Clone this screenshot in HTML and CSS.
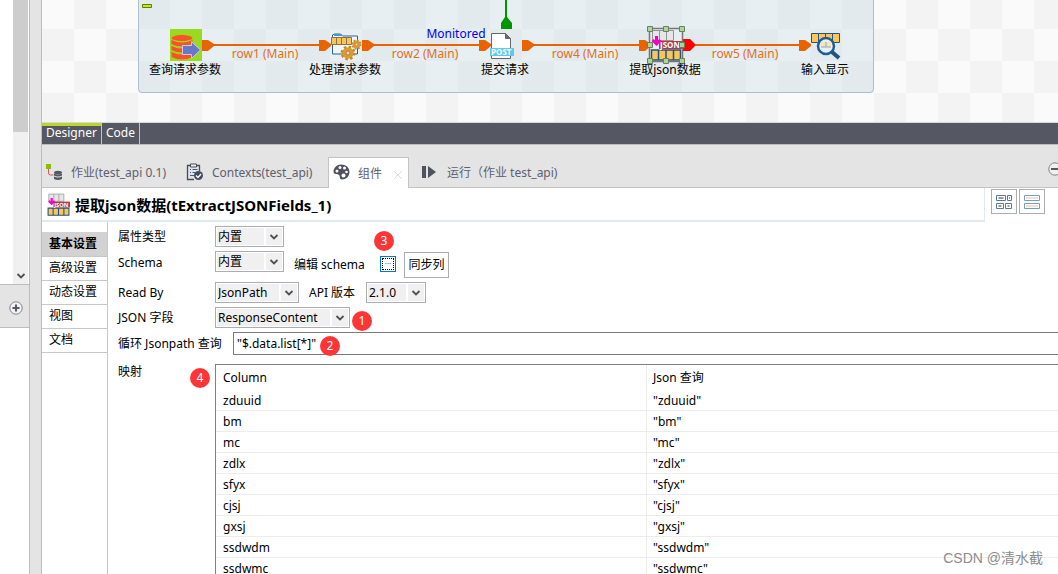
FILE: index.html
```html
<!DOCTYPE html>
<html lang="zh-CN">
<head>
<meta charset="utf-8">
<title>Job designer</title>
<link rel="stylesheet" href="styles.css">
</head>
<body>
<svg class="defs" aria-hidden="true">
  <defs>
    <symbol id="json-icon" viewBox="0 0 32 32">
      <path d="M2.500 1.500h21v10h-21z" fill="#e6e6e8" stroke="#929298"/>
      <path d="M9.500 1.500v10M16.500 1.500v10" stroke="#929298"/>
      <path d="M1.500 21h29v10h-29z" fill="#fbc55a" stroke="#1f5484" stroke-width="1.500"/>
      <path d="M8.500 21v10M16 21v10M23.500 21v10" stroke="#1f5484" stroke-width="1.500"/>
      <path d="M9 12h23v8H9z" fill="#b43c42"/>
      <path d="M6.500 7v8M2.500 11l4 4 4-4" fill="none" stroke="#f400c8" stroke-width="3"/>
      <text x="10" y="19" class="icon-json">JSON</text>
    </symbol>
    <symbol id="chevron" viewBox="0 0 10 8">
      <path d="M1.500 2l3.500 3.500L8.500 2" fill="none" stroke="#505050" stroke-width="1.800"/>
    </symbol>
    <symbol id="gear" viewBox="-8 -8 16 16">
      <circle r="5.800" fill="#dc9a35"/>
      <circle r="6.300" fill="none" stroke="#c98420" stroke-width="2.200" stroke-dasharray="2.400 2.540"/>
      <circle r="2" fill="#f1e3c5" stroke="#b97a20"/>
    </symbol>
  </defs>
</svg>
<div class="workbench">
  <aside class="palette">
    <div class="palette-scroll">
      <div class="scrollbar"><div class="thumb"></div><svg class="scroll-arrow" width="10" height="8"><use href="#chevron"/></svg></div>
    </div>
    <div class="palette-bar">
      <button class="plain" aria-label="Add"><svg width="14" height="14" viewBox="0 0 14 14"><circle cx="7" cy="7" r="6.200" fill="#f2f2f2" stroke="#80808a"/><path d="M3.500 7h7M7 3.500v7" stroke="#555862" stroke-width="2"/></svg></button>
    </div>
  </aside>
  <main class="main">
    <section class="canvas">
      <div class="subjob"></div>
      <svg class="diagram" width="1016" height="122" viewBox="42 0 1016 122">
        <path d="M142.500 4.500h9v3h-9z" fill="#bff000" stroke="#5f7d00"/>
        <g stroke="#e86400" stroke-width="2">
          <path d="M212 45H322M372 45H482M532 45H642M692 45H802"/>
        </g>
        <g fill="#e86400">
          <path d="M202 40h6l6 4v2l-6 5h-6z"/>
          <path d="M319 40h6l6 4v2l-6 5h-6zM362 40h6l6 4v2l-6 5h-6zM479 40h6l6 4v2l-6 5h-6zM522 40h6l6 4v2l-6 5h-6zM639 40h6l6 4v2l-6 5h-6zM799 40h6l6 4v2l-6 5h-6z"/>
        </g>
        <path d="M506 0v18" stroke="#009600" stroke-width="2"/>
        <path d="M501 29v-6l4-6h2l5 6v6z" fill="#009600"/>

        <rect x="170" y="29" width="32" height="32" fill="#99d91f"/>
        <g fill="#ff5029">
          <ellipse cx="182" cy="38" rx="10.500" ry="3"/>
          <path d="M171.500 40q10.500 5 21 0v4q-10.500 5-21 0zM171.500 46q10.500 5 21 0v4q-10.500 5-21 0zM171.500 52q10.500 5 21 0v5q-10.500 5-21 0z"/>
        </g>
        <path d="M182.500 45.500h9v-4l9 8.500-9 8.500v-4h-9z" fill="#6878c8" stroke="#c9cbed"/>

        <path d="M332.500 36v-1l2-1h6l2 2h15v18h-25z" fill="#eef6f9" stroke="#2a6496"/>
        <path d="M334 34h8v2h-8z" fill="#4a9ad0"/>
        <path d="M331.500 37.500h20v7h-20z" fill="#fbc55a" stroke="#8c723c"/>
        <path d="M336.500 37v7M341.500 37v7M346.500 37v7" stroke="#8c723c"/>
        <use href="#gear" x="340" y="45" width="16" height="16"/>
        <use href="#gear" x="351" y="39" width="11" height="11"/>

        <path d="M491.500 33.500h14l5 5v20h-19z" fill="#fff" stroke="#666570"/>
        <path d="M505.500 33.500v5h5z" fill="#666570" stroke="#666570"/>
        <path d="M490 48h24v8h-24z" fill="#5ec8ee"/>
        <text x="491" y="55" class="icon-post">POST</text>

        <use href="#json-icon" x="650" y="29" width="32" height="32"/>
        <path d="M682 39h8l5 5v2l-5 5h-8z" fill="#f00"/>
        <path d="M649.500 28.500h33v33h-33z" fill="none" stroke="#777" stroke-width="1.500"/>
        <g fill="#a8d893" stroke="#6b7c65">
          <path d="M647.500 26.500h5v5h-5zM663.500 26.500h5v5h-5zM679.500 26.500h5v5h-5zM647.500 42.500h5v5h-5zM679.500 42.500h5v5h-5zM647.500 58.500h5v5h-5zM663.500 58.500h5v5h-5zM679.500 58.500h5v5h-5z"/>
        </g>

        <path d="M811.500 33.500h28v9h-28z" fill="#fbc55a" stroke="#1f5484"/>
        <path d="M818.500 33v10M825.500 33v10M832.500 33v10" stroke="#1f5484"/>
        <circle cx="826" cy="46" r="8" fill="#e4f0f7" stroke="#1f5d91" stroke-width="2.500"/>
        <path d="M821 42h10v5h-10z" fill="#fbe4b0"/><path d="M826 42v5M821 47h10" stroke="#8ba9bd"/>
        <path d="M832 52l7 6" stroke="#1f5484" stroke-width="4"/>

        <g class="row-label">
          <text x="265" y="58">row1 (Main)</text>
          <text x="425" y="58">row2 (Main)</text>
          <text x="585" y="58">row4 (Main)</text>
          <text x="745" y="58">row5 (Main)</text>
        </g>
        <text class="monitored" x="456" y="38">Monitored</text>
        <g class="node-label">
          <text x="185" y="74">查询请求参数</text>
          <text x="345" y="74">处理请求参数</text>
          <text x="505" y="74">提交请求</text>
          <text x="665" y="74">提取json数据</text>
          <text x="825" y="74">输入显示</text>
        </g>
      </svg>
    </section>
    <nav class="editor-tabs">
      <button class="editor-tab active">Designer</button>
      <button class="editor-tab">Code</button>
    </nav>
    <nav class="view-tabs">
      <button class="view-tab job">
        <svg width="18" height="18" viewBox="0 0 18 18"><path d="M1 1h5v5H1z" fill="#8cbe00"/><path d="M3.500 6v4q0 2 2 2h3" fill="none" stroke="#d9545c"/><g fill="#555862"><ellipse cx="13" cy="9.500" rx="4" ry="1.800"/><path d="M9 10.500q4 2 8 0v2q-4 2-8 0zM9 13.500q4 2 8 0v2.500q-4 2-8 0z"/></g></svg>
        <span>作业(test_api 0.1)</span>
      </button>
      <button class="view-tab contexts">
        <svg width="18" height="18" viewBox="0 0 18 18"><path d="M8 16.500H1.500v-14h12V8" fill="none" stroke="#454c5e" stroke-width="1.300"/><path d="M4.500 1h6v3h-6z" fill="#eee" stroke="#454c5e"/><path d="M4 6.500h1M6.500 6.500h5M4 9.500h1M6.500 9.500h3M4 12.500h4" stroke="#37618c"/><circle cx="12.500" cy="12.500" r="4.500" fill="#454c5e"/><path d="M10 12.500l2 2 3-3.500" fill="none" stroke="#fff" stroke-width="1.300"/></svg>
        <span>Contexts(test_api)</span>
      </button>
      <button class="view-tab component active">
        <svg width="17" height="16" viewBox="0 0 17 16"><path d="M8 0.500c5 0 8.500 3 8.500 7.500S13 15.500 9 15.500c-3 0-1.500-3-3-4.500S0.500 11 0.500 7.500 4 0.500 8 0.500z" fill="#4e525d"/><g fill="#fff"><circle cx="4" cy="7" r="1.500"/><circle cx="7" cy="3.500" r="1.500"/><circle cx="11.500" cy="4" r="1.500"/><circle cx="13.500" cy="8" r="1.300"/><circle cx="10.500" cy="11.500" r="2"/></g></svg>
        <span>组件</span>
        <svg class="close" width="8" height="8" viewBox="0 0 8 8"><path d="M0 0l8 8M8 0L0 8" stroke="#dcdcdc"/></svg>
      </button>
      <button class="view-tab run">
        <svg width="14" height="12" viewBox="0 0 14 12"><path d="M0 0h4v12H0zM6 0l8 6-8 6z" fill="#4e525d"/></svg>
        <span>运行（作业 test_api)</span>
      </button>
      <button class="plain minimize" aria-label="Minimize"><svg width="14" height="14" viewBox="0 0 14 14"><circle cx="7" cy="7" r="6.200" fill="#f0f0f0" stroke="#80808a"/><path d="M3 7h8" stroke="#555862" stroke-width="2"/></svg></button>
    </nav>
    <header class="header">
      <h1 class="title"><svg width="23" height="23"><use href="#json-icon"/></svg><span>提取json数据(tExtractJSONFields_1)</span></h1>
      <div class="layout-buttons">
        <button class="layout-button" aria-label="Table layout"><svg width="16" height="14" viewBox="0 0 16 14"><path d="M.5.500h9v5h-9zM11.500.500h4v5h-4zM.5 8.500h7v5h-7zM9.500 8.500h6v5h-6z" fill="#fff" stroke="#5b7894"/><path d="M2.500 3h5M13 3h1M2.500 11h3M11.500 11h2" stroke="#999" stroke-width="2"/></svg></button>
        <button class="layout-button" aria-label="Row layout"><svg width="16" height="14" viewBox="0 0 16 14"><path d="M.5.500h15v5H.5zM.5 8.500h15v5H.5z" fill="#fff" stroke="#7a9dbf"/><path d="M2 3h12M2 11h12" stroke="#ebe5d3" stroke-width="2"/></svg></button>
      </div>
    </header>
    <div class="content">
      <nav class="side">
        <button class="side-item active">基本设置</button>
        <button class="side-item">高级设置</button>
        <button class="side-item">动态设置</button>
        <button class="side-item">视图</button>
        <button class="side-item">文档</button>
      </nav>
      <form class="form">
        <div class="row">
          <label class="label" for="ptype">属性类型</label>
          <span class="combo small"><select id="ptype"><option>内置</option></select><svg><use href="#chevron"/></svg></span>
        </div>
        <div class="row schema">
          <label class="label" for="schema">Schema</label>
          <span class="combo small"><select id="schema"><option>内置</option></select><svg><use href="#chevron"/></svg></span>
          <label class="edit-label" for="edit">编辑 schema</label>
          <button type="button" class="edit" id="edit"><span class="edit-dots">···</span></button>
          <button type="button" class="sync">同步列</button>
          <span class="badge three">3</span>
        </div>
        <div class="row">
          <label class="label" for="readby">Read By</label>
          <span class="combo medium"><select id="readby"><option>JsonPath</option></select><svg><use href="#chevron"/></svg></span>
          <label class="api-label" for="api">API 版本</label>
          <span class="combo version"><select id="api"><option>2.1.0</option></select><svg><use href="#chevron"/></svg></span>
        </div>
        <div class="row">
          <label class="label" for="field">JSON 字段</label>
          <span class="combo large"><select id="field"><option>ResponseContent</option></select><svg><use href="#chevron"/></svg></span>
          <span class="badge one">1</span>
        </div>
        <div class="row">
          <label class="query-label" for="query">循环 Jsonpath 查询</label>
          <input class="query" id="query" type="text" value="&quot;$.data.list[*]&quot;">
          <span class="badge two">2</span>
        </div>
        <div class="row mapping">
          <span class="label">映射</span>
          <table class="table">
            <thead><tr><th class="first">Column</th><th>Json 查询</th></tr></thead>
            <tbody>
              <tr><td>zduuid</td><td>"zduuid"</td></tr>
              <tr><td>bm</td><td>"bm"</td></tr>
              <tr><td>mc</td><td>"mc"</td></tr>
              <tr><td>zdlx</td><td>"zdlx"</td></tr>
              <tr><td>sfyx</td><td>"sfyx"</td></tr>
              <tr><td>cjsj</td><td>"cjsj"</td></tr>
              <tr><td>gxsj</td><td>"gxsj"</td></tr>
              <tr><td>ssdwdm</td><td>"ssdwdm"</td></tr>
              <tr><td>ssdwmc</td><td>"ssdwmc"</td></tr>
            </tbody>
          </table>
          <span class="badge four">4</span>
        </div>
      </form>
    </div>
  </main>
</div>
<div class="watermark">CSDN @清水截</div>
</body>
</html>
```
FILE: styles.css
```css
* { box-sizing: border-box; }
body {
  margin: 0;
  height: 100vh;
  overflow: hidden;
  position: relative;
  background: #fff;
  color: #000;
  font: 12px/20px "Noto Sans", "Noto Sans CJK SC", sans-serif;
}
button, select, input { font: inherit; color: inherit; margin: 0; }
button { background: none; border: 0; padding: 0; }
svg { display: block; flex: none; }
.defs { position: absolute; width: 0; height: 0; }
.workbench { display: flex; height: 100%; }

.palette { width: 30px; flex: none; border-right: 1px solid #bcbcbe; }
.palette-scroll { height: 284px; display: flex; justify-content: flex-end; padding-right: 1px; }
.scrollbar {
  width: 15px;
  background: #f0f0f0;
  display: flex;
  flex-direction: column;
  justify-content: space-between;
  align-items: center;
  padding-bottom: 4px;
}
.thumb { width: 100%; height: 132px; background: #cdcdcd; }
.scroll-arrow { width: 10px; height: 8px; }
.palette-bar {
  height: 44px;
  background: #e4e4e4;
  border-top: 1px solid #bcbcbe;
  border-bottom: 1px solid #bcbcbe;
  display: flex;
  align-items: center;
  padding: 4px 0 0 9px;
}

.main {
  flex: 1;
  min-width: 0;
  display: flex;
  flex-direction: column;
  margin-left: 11px;
  border-left: 1px solid #bcbcbe;
  box-shadow: -11px 0 0 #e4e4e4;
}
.canvas {
  position: relative;
  flex: none;
  height: 122px;
  overflow: hidden;
  background: conic-gradient(#f3f3f3 25%, #fafafa 0 50%, #f3f3f3 0 75%, #fafafa 0) 0 -3px / 64px 64px;
}
.subjob {
  position: absolute;
  left: 96px;
  top: -6px;
  width: 736px;
  height: 99px;
  border: 1px solid #a9bfd0;
  border-radius: 4px;
  background: rgba(190, 215, 225, 0.3);
}
.diagram { position: relative; }
.row-label { fill: #e0701c; text-anchor: middle; }
.node-label { text-anchor: middle; }
.monitored { fill: #0000ee; text-anchor: middle; }
.icon-json { font: bold 8px "Open Sans", sans-serif; fill: #fff; }
.icon-post { font: bold 8px "Open Sans", sans-serif; fill: #fff; }

.editor-tabs {
  flex: none;
  height: 23px;
  display: flex;
  background: #555862;
  border-top: 1px solid #d8d8d8;
  border-bottom: 1px solid #bcbcbe;
}
.editor-tab { color: #fff; padding: 0 4px 2px; border-right: 1px solid #c4c4c8; }
.editor-tab.active { box-shadow: inset 0 3px #bdd62b; }

.view-tabs {
  flex: none;
  position: relative;
  height: 43px;
  display: flex;
  align-items: flex-end;
  background: #e4e4e4;
  border-bottom: 1px solid #c4c4c4;
  color: #5c6070;
}
.view-tab { height: 30px; display: flex; align-items: center; gap: 8px; white-space: nowrap; }
.view-tab span { padding-top: 2px; }
.job { width: 140px; padding-left: 3px; }
.contexts { width: 146px; padding-left: 4px; }
.component { width: 81px; padding-left: 4px; }
.component.active { height: 31px; margin-bottom: -1px; background: #fff; border: 1px solid #c4c4c4; border-bottom: 0; }
.component svg:first-child { margin-bottom: 2px; }
.close { margin: 4px 0 0 4px; }
.run { padding-left: 13px; gap: 11px; }
.minimize { position: absolute; right: -4px; top: 17px; }

.header { flex: none; display: flex; align-items: flex-start; padding-right: 13px; gap: 6px; }
.title {
  flex: 1;
  margin: 0;
  height: 34px;
  display: flex;
  align-items: center;
  gap: 5px;
  padding-left: 5px;
  font-size: 15px;
  border-bottom: 2px solid #e0e9f2;
  border-right: 1px solid #e0e9f2;
}
.title span { padding-top: 2px; }
.layout-buttons { display: flex; gap: 2px; padding-top: 1px; }
.layout-button { width: 26px; height: 25px; border: 1px solid #adadad; display: flex; align-items: center; justify-content: center; }

.content { flex: 1; min-height: 0; display: flex; }
.side { width: 66px; flex: none; padding-top: 10px; border-right: 1px solid #c8c8c8; }
.side-item { display: block; width: 100%; height: 24px; padding: 0 0 2px 7px; text-align: left; border-bottom: 1px solid #c8c8c8; }
.side-item.active { background: #d2d2d2; font-weight: bold; height: 25px; padding-bottom: 0; }

.form { flex: 1; min-width: 0; display: flex; flex-direction: column; gap: 4px; padding: 4px 0 0 10px; }
.row { position: relative; flex: none; display: flex; align-items: center; white-space: nowrap; }
.label { width: 97px; flex: none; padding-top: 1px; }
.combo { position: relative; display: block; height: 21px; }
.combo select {
  width: 100%;
  height: 21px;
  padding: 0 0 0 2px;
  appearance: none;
  background: linear-gradient(#fff, #fff) right 17px top 0 / 2px 100% no-repeat #f0f0f0;
  border: 1px solid #abadb3;
  border-radius: 0;
  box-shadow: inset 0 0 0 1px #fff;
}
.combo svg { position: absolute; right: 5px; top: 7px; width: 10px; height: 8px; pointer-events: none; }
.small { width: 69px; }
.medium { width: 84px; }
.large { width: 135px; }
.version { width: 60px; }
.schema { height: 27px; align-items: flex-start; }
.schema .label { padding-top: 2px; }
.edit-label { width: 86px; margin-left: 10px; padding-top: 4px; }
.edit { width: 16px; height: 16px; margin-top: 5px; padding: 1px; border: 1px solid #0078d7; }
.edit-dots { display: block; height: 12px; border: 1px dotted #000; font-size: 8px; line-height: 9px; color: #667; }
.sync { width: 45px; height: 26px; margin: 1px 0 0 8px; border: 1px solid #adadad; }
.api-label { width: 57px; margin-left: 10px; padding-top: 1px; }
.query-label { width: 115px; flex: none; }
.query { flex: 1; min-width: 0; height: 23px; padding: 0 3px; border: 1px solid #7a7a7a; border-right: 0; outline: 0; }
.mapping { align-items: flex-start; padding-top: 5px; }
.mapping .label { line-height: 14px; }
.table { flex: 1; width: 100%; border-collapse: separate; border-spacing: 0; border: 1px solid #7a828c; border-right: 0; table-layout: fixed; }
.table th { height: 25px; padding: 0 7px; font-weight: normal; text-align: left; border-right: 1px solid #ececec; }
.table .first { width: 431px; }
.table td { height: 21px; padding: 2px 7px 0; line-height: 18px; border-right: 1px solid #ececec; border-bottom: 1px solid #ececec; }
.table tr > :last-child { padding-left: 6px; border-right: 0; }

.badge {
  position: absolute;
  width: 20px;
  height: 20px;
  border-radius: 50%;
  background: #fc3636;
  color: #fff;
  text-align: center;
}
.three { left: 256px; top: -20px; }
.one { left: 234px; top: 4px; }
.two { left: 202px; top: 4px; }
.four { left: 72px; top: 9px; }
.watermark { position: absolute; right: 15px; bottom: 6px; font-family: "Liberation Sans", "Noto Sans CJK SC", sans-serif; font-size: 14px; color: #8c8c8c; }
```
